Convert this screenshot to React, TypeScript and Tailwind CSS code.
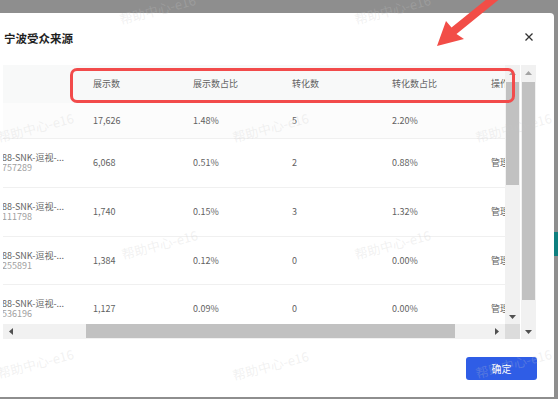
import React from "react";

type Row = {
  name?: string;
  id?: string;
  shows: string;
  showRate: string;
  conv: string;
  convRate: string;
  op?: string;
};

const ROWS: Row[] = [
  { shows: "17,626", showRate: "1.48%", conv: "5", convRate: "2.20%" },
  { name: "88-SNK-逗视-...", id: "757289", shows: "6,068", showRate: "0.51%", conv: "2", convRate: "0.88%", op: "管理" },
  { name: "88-SNK-逗视-...", id: "111798", shows: "1,740", showRate: "0.15%", conv: "3", convRate: "1.32%", op: "管理" },
  { name: "88-SNK-逗视-...", id: "255891", shows: "1,384", showRate: "0.12%", conv: "0", convRate: "0.00%", op: "管理" },
  { name: "88-SNK-逗视-...", id: "536196", shows: "1,127", showRate: "0.09%", conv: "0", convRate: "0.00%", op: "管理" },
];

// row heights as measured, last one is clipped by the horizontal bar
const ROW_H = ["h-[36px]", "h-[49px]", "h-[49px]", "h-[48px]", "h-[48px]"];

// watermark starts: [left, top]
const MARKS: [number, number][] = [
  [120, 13], [355, 13],
  [-2, 131], [233, 131], [476, 131],
  [122, 248], [355, 248],
  [-2, 367], [233, 369], [476, 367],
];

const GRID = "grid grid-cols-[85px_100px_99px_100px_99px_100px]";

function Arrow({ dir, dark }: { dir: "up" | "down" | "left" | "right"; dark?: boolean }) {
  const pts = {
    up: "0,4 3.5,0 7,4",
    down: "0,0 7,0 3.5,4",
    left: "4,0 4,7 0,3.5",
    right: "0,0 0,7 4,3.5",
  }[dir];
  const vertical = dir === "up" || dir === "down";
  return (
    <svg width={vertical ? 7 : 4} height={vertical ? 4 : 7} viewBox={vertical ? "0 0 7 4" : "0 0 4 7"}>
      <polygon points={pts} fill={dark ? "#505050" : "#a3a3a3"} />
    </svg>
  );
}

function VScroll({ thumbTop, thumbH, total }: { thumbTop: number; thumbH: number; total: number }) {
  return (
    <div className="relative w-[15px] bg-[#f1f1f1] flex flex-col" style={{ height: total }}>
      <div className="h-[15px] flex items-center justify-center">
        <Arrow dir="up" />
      </div>
      <div className="absolute left-[1px] right-[1px] bg-[#c1c1c1]" style={{ top: thumbTop, height: thumbH }} />
      <div className="mt-auto h-[15px] flex items-center justify-center">
        <Arrow dir="down" dark />
      </div>
    </div>
  );
}

export default function App() {
  return (
    <div className="relative w-[558px] h-[399px] overflow-hidden bg-[#8e8e8e] font-['Noto_Sans_CJK_SC',sans-serif]">
      <div className="mt-[13px] w-[554px] h-[384px] bg-white rounded-tr-[4px] flex flex-col">
        {/* title */}
        <div className="h-[52px] flex items-center justify-between pl-[4px] pr-[21px]">
          <span className="text-[11.5px] font-bold text-[#1f1f1f] leading-none">宁波受众来源</span>
          <svg width="8" height="8" viewBox="0 0 8 8" className="-mt-[4px]">
            <path d="M0.5 0.5 L7.5 7.5 M7.5 0.5 L0.5 7.5" stroke="#333" strokeWidth="1.3" />
          </svg>
        </div>

        {/* body */}
        <div className="flex pl-[3px] h-[274px]">
          <div className="flex flex-col w-[517px]">
            <div className="flex h-[259px]">
              <div className="w-[502px] overflow-hidden text-[9px] text-[#626262]">
                <div className={`${GRID} h-[38px] items-center bg-[#f8f9f9]`}>
                  <div />
                  <div className="pl-[5px]">展示数</div>
                  <div className="pl-[5px]">展示数占比</div>
                  <div className="pl-[5px]">转化数</div>
                  <div className="pl-[5px]">转化数占比</div>
                  <div className="pl-[5px] whitespace-nowrap">操作</div>
                </div>
                {ROWS.map((r, i) => (
                  <div
                    key={i}
                    className={`${GRID} ${ROW_H[i]} items-center border-b border-[#f0f0f0] ${i === 0 ? "bg-[#fcfcfc]" : "bg-white"}`}
                  >
                    <div className="-ml-[1px] flex flex-col leading-[10px] whitespace-nowrap">
                      {r.name && <span>{r.name}</span>}
                      {r.id && <span className="text-[#a0a0a0]">{r.id}</span>}
                    </div>
                    <div className="pl-[5px]">{r.shows}</div>
                    <div className="pl-[5px]">{r.showRate}</div>
                    <div className="pl-[5px]">{r.conv}</div>
                    <div className="pl-[5px]">{r.convRate}</div>
                    <div className="pl-[5px] whitespace-nowrap">{r.op}</div>
                  </div>
                ))}
              </div>
              <VScroll thumbTop={17} thumbH={103} total={259} />
            </div>
            <div className="flex h-[15px]">
              <div className="relative w-[502px] bg-[#f1f1f1] flex items-center justify-between px-[6px]">
                <Arrow dir="left" dark />
                <div className="absolute top-0 bottom-[1px] left-[83px] w-[369px] bg-[#c1c1c1]" />
                <Arrow dir="right" dark />
              </div>
              <div className="w-[15px] bg-[#dcdcdc]" />
            </div>
          </div>
          <div className="ml-[1px]">
            <VScroll thumbTop={17} thumbH={218} total={274} />
          </div>
        </div>

        {/* footer */}
        <div className="flex justify-end pr-[17px] pt-[18px]">
          <button className="w-[71px] h-[23px] rounded-[3px] bg-[#2f5de6] text-white text-[10px] leading-none">
            确定
          </button>
        </div>
      </div>

      {/* page peeking at the right edge */}
      <div className="absolute right-0 top-[232px] w-[4px] h-[24px] bg-[#0e7f7f]" />

      {/* red highlight box */}
      <div className="absolute left-[70px] top-[68px] w-[445px] h-[35px] rounded-[7px] border-[3px] border-[#f24b4b]" />

      {/* red arrow */}
      <svg className="absolute left-0 top-0 pointer-events-none" width="558" height="399">
        <polygon
          points="437,46 446,21 451.5,27.5 497.5,-9.6 502.5,-3.4 456.5,34 464,39"
          fill="#f24d47"
        />
      </svg>

      {/* watermark */}
      {MARKS.map(([x, y], i) => (
        <span
          key={i}
          className="absolute pointer-events-none whitespace-nowrap text-[13px] leading-[14px] text-[rgba(200,200,200,0.25)] origin-left -rotate-[15deg]"
          style={{ left: x, top: y }}
        >
          帮助中心-e16
        </span>
      ))}
    </div>
  );
}
